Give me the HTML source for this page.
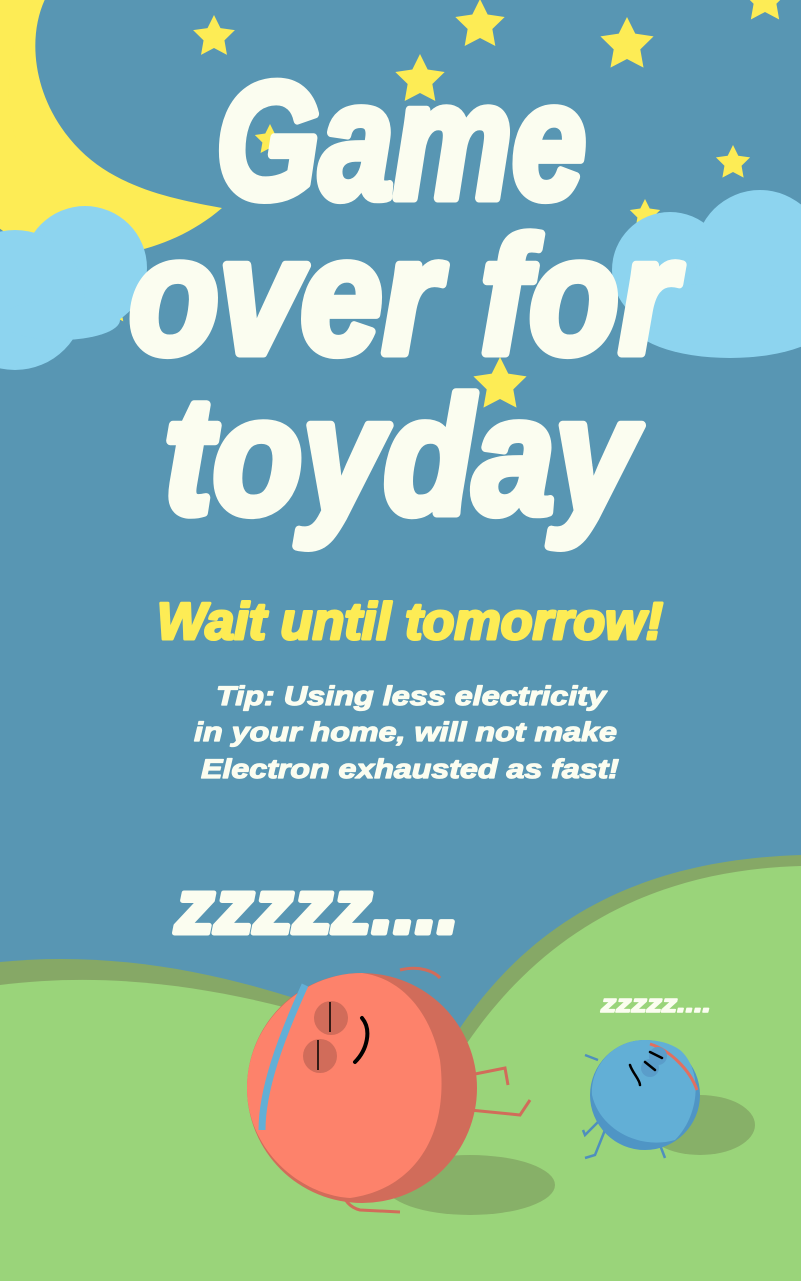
<!DOCTYPE html>
<html><head><meta charset="utf-8"><style>
html,body{margin:0;padding:0;width:801px;height:1281px;overflow:hidden;background:#5896b3}
svg{display:block}
text{font-family:"Liberation Sans",sans-serif;font-weight:bold;font-style:italic}
</style></head><body>
<svg width="801" height="1281" viewBox="0 0 801 1281" xmlns="http://www.w3.org/2000/svg">
<defs>
<polygon id="st" points="0,-20 5.9,-8.1 19,-6.2 9.5,3.1 11.8,16.2 0,10 -11.8,16.2 -9.5,3.1 -19,-6.2 -5.9,-8.1"/>
</defs>
<rect width="801" height="1281" fill="#5896b3"/>
<path d="M30,-10 C-20,60 -10,170 60,215 C110,245 170,232 222,208 C180,200 120,190 80,150 C30,100 25,30 50,-10 Z" fill="#fdec55"/>
<path d="M40,-10 C-10,60 0,170 70,210 C120,235 180,220 222,208 C150,270 40,270 -10,220 L-10,-10 Z" fill="#fdec55"/>
<g fill="#fdec55">
<use href="#st" transform="translate(214,37) scale(1.1)"/>
<use href="#st" transform="translate(480,25) scale(1.3)"/>
<use href="#st" transform="translate(627,45) scale(1.4)"/>
<use href="#st" transform="translate(765,0) scale(1.2)"/>
<use href="#st" transform="translate(420,80) scale(1.3)"/>
<use href="#st" transform="translate(733,163) scale(0.9)"/>
<use href="#st" transform="translate(645,215) scale(0.8)"/>
<use href="#st" transform="translate(270,140) scale(0.8)"/>
<use href="#st" transform="translate(500,385) scale(1.4)"/>
<use href="#st" transform="translate(115,310) scale(0.7)"/>
</g>
<g fill="#8dd4ef">
<circle cx="85" cy="268" r="62"/>
<circle cx="15" cy="300" r="70"/>
<ellipse cx="60" cy="320" rx="60" ry="20"/>
<circle cx="670" cy="270" r="58"/>
<circle cx="760" cy="255" r="65"/>
<ellipse cx="730" cy="320" rx="100" ry="38"/>
</g>
<path d="M0,962 C120,950 230,975 330,1010 L330,1281 L0,1281 Z" fill="#86a866"/>
<path d="M0,985 C120,970 230,990 330,1020 L330,1281 L0,1281 Z" fill="#9ad47a"/>
<path d="M440,1060 C520,920 640,860 801,855 L801,1281 L440,1281 Z" fill="#86a866"/>
<path d="M450,1070 C530,935 650,870 801,866 L801,1281 L430,1281 Z" fill="#9ad47a"/>
<rect x="0" y="1060" width="801" height="221" fill="#9ad47a"/>
<path d="M300,1000 C340,1020 420,1050 460,1080 L300,1090 Z" fill="#9ad47a"/>
<ellipse cx="470" cy="1185" rx="85" ry="30" fill="#87b068"/>
<ellipse cx="700" cy="1125" rx="55" ry="30" fill="#87b068"/>
<g>
<path d="M400,970 C420,965 435,972 440,978" stroke="#d16c5a" stroke-width="3" fill="none"/>
<path d="M470,1075 L505,1068 L508,1085 M470,1110 L520,1115 L530,1100" stroke="#d16c5a" stroke-width="3" fill="none"/>
<path d="M345,1150 C335,1180 340,1205 360,1210 L400,1212" stroke="#d16c5a" stroke-width="3" fill="none"/>
<circle cx="362" cy="1088" r="115" fill="#d16c5a"/>
<path d="M362,973 C300,973 247,1025 247,1088 C247,1150 300,1195 350,1198 C410,1190 450,1140 440,1060 C430,1010 400,978 362,973 Z" fill="#fd826b"/>
<path d="M305,985 C280,1040 262,1090 262,1130" stroke="#62afd6" stroke-width="7" fill="none"/>
<circle cx="331" cy="1018" r="17" fill="#d16c5a"/>
<circle cx="320" cy="1056" r="17" fill="#d16c5a"/>
<path d="M318,1040 L318,1070 M330,1002 L330,1032" stroke="#000" stroke-width="1.5"/>
<path d="M362,1018 C372,1030 367,1050 355,1062" stroke="#000" stroke-width="4" fill="none" stroke-linecap="round"/>
</g>
<g>
<path d="M598,1060 L585,1055 M600,1120 L585,1135 L583,1130 M605,1130 L595,1155 L585,1158 M660,1145 L665,1158" stroke="#4f8fbd" stroke-width="2.5" fill="none"/>
<circle cx="645" cy="1095" r="55" fill="#4f95c5"/>
<path d="M645,1040 C610,1040 590,1070 592,1095 C600,1130 640,1150 675,1140 C700,1115 703,1070 680,1050 C670,1043 658,1040 645,1040 Z" fill="#62afd6"/>
<path d="M650,1044 C670,1050 690,1070 697,1090" stroke="#e26f5f" stroke-width="3" fill="none"/>
<circle cx="650" cy="1068" r="9" fill="#5a9dca"/>
<circle cx="658" cy="1056" r="9" fill="#5a9dca"/>
<path d="M630,1065 C632,1072 640,1080 640,1085 M645,1062 L655,1070 M650,1052 L662,1058" stroke="#000" stroke-width="2.5" fill="none" stroke-linecap="round"/>
</g>
<g fill="#fbfdf0" stroke="#fbfdf0" stroke-linejoin="round">
<text x="216" y="198" font-size="166" stroke-width="9" textLength="370" lengthAdjust="spacingAndGlyphs">Game</text>
<text x="129" y="353" font-size="166" stroke-width="9" textLength="547" lengthAdjust="spacingAndGlyphs">over for</text>
<text x="164" y="513" font-size="166" stroke-width="9" textLength="472" lengthAdjust="spacingAndGlyphs">toyday</text>
<text x="175" y="933" font-size="76" stroke-width="5" textLength="284" lengthAdjust="spacingAndGlyphs">zzzzz....</text>
<text x="601" y="1012" font-size="24" stroke-width="1.5" textLength="110" lengthAdjust="spacingAndGlyphs">zzzzz....</text>
<text x="216" y="705" font-size="27" stroke-width="1.2" textLength="390" lengthAdjust="spacingAndGlyphs">Tip: Using less electricity</text>
<text x="194" y="741" font-size="27" stroke-width="1.2" textLength="423" lengthAdjust="spacingAndGlyphs">in your home, will not make</text>
<text x="201" y="778" font-size="27" stroke-width="1.2" textLength="418" lengthAdjust="spacingAndGlyphs">Electron exhausted as fast!</text>
</g>
<text x="157" y="639" font-size="52" fill="#fdec55" stroke="#fdec55" stroke-width="3" stroke-linejoin="round" textLength="506" lengthAdjust="spacingAndGlyphs">Wait until tomorrow!</text>
</svg>
</body></html>
